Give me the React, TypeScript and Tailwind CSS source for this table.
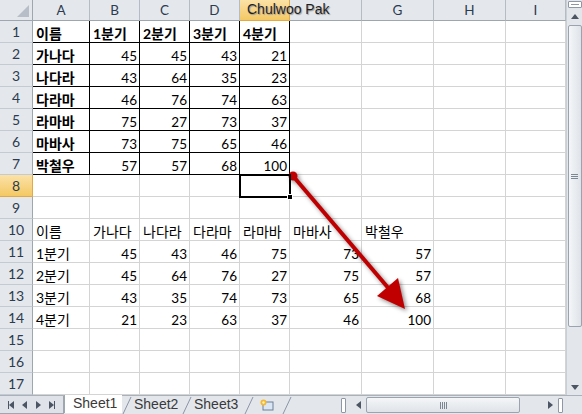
import React from "react";

const top: (string | number)[][] = [
  ["이름", "1분기", "2분기", "3분기", "4분기"],
  ["가나다", 45, 45, 43, 21],
  ["나다라", 43, 64, 35, 23],
  ["다라마", 46, 76, 74, 63],
  ["라마바", 75, 27, 73, 37],
  ["마바사", 73, 75, 65, 46],
  ["박철우", 57, 57, 68, 100],
];
const bottom: (string | number)[][] = [
  ["이름", "가나다", "나다라", "다라마", "라마바", "마바사", "박철우"],
  ["1분기", 45, 43, 46, 75, 73, 57],
  ["2분기", 45, 64, 76, 27, 75, 57],
  ["3분기", 43, 35, 74, 73, 65, 68],
  ["4분기", 21, 23, 63, 37, 46, 100],
];

const letters = ["A", "B", "C", "D", "", "", "G", "H", "I"];

function getCell(r: number, c: number): { v: string | number | null; bold: boolean } {
  if (r >= 1 && r <= 7 && c < 5) {
    const v = top[r - 1][c];
    return { v, bold: r === 1 || c === 0 };
  }
  if (r >= 10 && r <= 14 && c < 7) {
    return { v: bottom[r - 10][c], bold: false };
  }
  return { v: null, bold: false };
}

function Cell({ r, c }: { r: number; c: number }) {
  const { v, bold } = getCell(r, c);
  const inRange = r >= 1 && r <= 7 && c < 5;
  const isNum = typeof v === "number";
  const selected = r === 8 && c === 4;
  const border = inRange ? "border-black" : "border-[#d4d4d4]";
  return (
    <div
      className={`relative flex items-end border-r border-b ${border} ${
        isNum ? "justify-end pr-[2px]" : "justify-start pl-[3px]"
      } overflow-visible whitespace-nowrap`}
    >
      {v !== null && (
        <span
          className={`${isNum ? "text-[13.5px] leading-[16px]" : "text-[14px] leading-[17px]"} ${
            bold ? "font-bold" : "font-normal"
          } text-black`}
        >
          {v}
        </span>
      )}
      {selected && (
        <div className="absolute left-[-1px] top-[-1px] w-[52px] h-[24px] border-2 border-black z-10">
          <div className="absolute right-[-4px] bottom-[-4px] w-[6px] h-[6px] bg-black border border-white" />
        </div>
      )}
    </div>
  );
}

function Tri({ dir }: { dir: "l" | "r" | "u" | "d" }) {
  const pts =
    dir === "l" ? "5,0 5,8 0,4" : dir === "r" ? "0,0 0,8 5,4" : dir === "u" ? "0,5 8,5 4,0" : "0,0 8,0 4,5";
  const w = dir === "l" || dir === "r" ? 5 : 8;
  const h = dir === "l" || dir === "r" ? 8 : 5;
  return (
    <svg width={w} height={h} viewBox={`0 0 ${w} ${h}`}>
      <polygon points={pts} fill="#4b5563" />
    </svg>
  );
}

function Slash() {
  return (
    <svg width="10" height="18" viewBox="0 0 10 18" className="shrink-0">
      <line x1="1" y1="18" x2="9" y2="1" stroke="#8b95a2" strokeWidth="1" />
    </svg>
  );
}

export default function App() {
  const rows = Array.from({ length: 17 }, (_, i) => i + 1);
  return (
    <div className="relative w-[582px] h-[414px] overflow-hidden bg-white font-['Lato','Noto_Sans_CJK_KR',sans-serif]">
      <div className="flex h-[395px]">
        <div className="grid grid-cols-[33px_57px_50px_50px_50px_50px_72px_72px_72px_60px] grid-rows-[21px_repeat(17,22px)] w-[566px] overflow-hidden">
          {/* corner */}
          <div className="relative bg-[#e4e8ed] border-r border-b border-[#9ea6b0] flex items-end justify-end pr-[3px] pb-[3px]">
            <svg width="12" height="12" viewBox="0 0 12 12">
              <polygon points="12,0 12,12 0,12" fill="#b8bec7" />
            </svg>
          </div>
          {letters.map((l, i) => (
            <div
              key={i}
              className={`flex items-center justify-center text-[13.5px] border-r border-b ${
                i === 4
                  ? "bg-gradient-to-b from-[#fbe2a6] to-[#f4c862] border-[#e2a948]"
                  : "bg-[#e4e8ed] border-[#b4bbc4] border-b-[#9ea6b0] text-[#2d3b4f]"
              }`}
            >
              {l}
            </div>
          ))}
          {rows.map((r) => (
            <React.Fragment key={r}>
              <div
                className={`flex items-center justify-center text-[14px] border-r border-b ${
                  r === 8
                    ? "bg-gradient-to-b from-[#fbe2a6] to-[#f4c862] border-[#e2a948] text-[#2d3b4f]"
                    : "bg-[#e4e8ed] border-[#c4cad2] border-r-[#9ea6b0] text-[#2d3b4f]"
                }`}
              >
                {r}
              </div>
              {letters.map((_, c) => (
                <Cell key={c} r={r} c={c} />
              ))}
            </React.Fragment>
          ))}
        </div>
        {/* vertical scrollbar */}
        <div className="w-[16px] bg-[#e3e7ec] border-l border-[#c9cfd6] flex flex-col items-center">
          <div className="w-[14px] h-[7px] mt-[1px] bg-white border border-[#8e97a3] rounded-[1px] flex items-center justify-center">
            <div className="w-[8px] h-[1px] bg-[#8e97a3]" />
          </div>
          <div className="h-[17px] flex items-center justify-center">
            <Tri dir="u" />
          </div>
          <div className="w-[14px] h-[302px] rounded-[2px] border border-[#9aa3ae] bg-gradient-to-r from-[#f4f6f8] to-[#dfe3e8] flex flex-col items-center justify-center gap-[1px]">
            <div className="w-[7px] h-[1px] bg-[#7d8794]" />
            <div className="w-[7px] h-[1px] bg-[#7d8794]" />
            <div className="w-[7px] h-[1px] bg-[#7d8794]" />
          </div>
          <div className="flex-1" />
          <div className="h-[16px] flex items-center justify-center">
            <Tri dir="d" />
          </div>
        </div>
      </div>
      {/* tab bar */}
      <div className="flex h-[19px] bg-[#e3e7ec] border-t border-[#a9b1bb]">
        <div className="w-[64px] flex items-center justify-around px-[4px] border-r border-b border-[#9ea6b0] bg-[#dfe3e9]">
          <div className="flex items-center">
            <div className="w-[1px] h-[8px] bg-[#4b5563]" />
            <Tri dir="l" />
          </div>
          <Tri dir="l" />
          <Tri dir="r" />
          <div className="flex items-center">
            <Tri dir="r" />
            <div className="w-[1px] h-[8px] bg-[#4b5563]" />
          </div>
        </div>
        <div className="flex items-start font-['Liberation_Sans',sans-serif] text-[14px] text-[#3a3a3a] leading-[17px]">
          <div className="w-[58px] h-[18px] mt-[-1px] bg-white border-l border-[#9ea6b0] pl-[8px]">Sheet1</div>
          <Slash />
          <div className="w-[50px] pl-[2px]">Sheet2</div>
          <Slash />
          <div className="w-[52px] pl-[2px]">Sheet3</div>
          <Slash />
          <div className="w-[28px] h-[18px] flex items-center pl-[6px]">
            <svg width="14" height="12" viewBox="0 0 14 12">
              <rect x="3" y="3" width="10" height="8" fill="#dbe6f4" stroke="#6d7f99" />
              <circle cx="3.5" cy="3.5" r="3" fill="#f5b82e" />
              <circle cx="3.5" cy="3.5" r="1.2" fill="#fff4c2" />
            </svg>
          </div>
          <Slash />
        </div>
        <div className="flex-1" />
        {/* horizontal scrollbar */}
        <div className="w-[228px] flex items-center bg-[#e3e7ec]">
          <div className="w-[5px] h-[15px] ml-[3px] bg-white border border-[#8e97a3] rounded-[1px]" />
          <div className="w-[16px] flex justify-center ml-[4px]">
            <Tri dir="l" />
          </div>
          <div className="w-[154px] h-[16px] rounded-[2px] border border-[#9aa3ae] bg-gradient-to-b from-[#f4f6f8] to-[#dfe3e8] flex items-center justify-center gap-[1px]">
            <div className="w-[1px] h-[7px] bg-[#7d8794]" />
            <div className="w-[1px] h-[7px] bg-[#7d8794]" />
            <div className="w-[1px] h-[7px] bg-[#7d8794]" />
            <div className="w-[1px] h-[7px] bg-[#7d8794]" />
          </div>
          <div className="flex-1" />
          <div className="w-[16px] flex justify-center">
            <Tri dir="r" />
          </div>
          <div className="w-[5px] h-[15px] mr-[3px] bg-white border border-[#8e97a3] rounded-[1px]" />
        </div>
        <div className="w-[16px] bg-[#e3e7ec]" />
      </div>
      {/* comment author overlay */}
      <div className="absolute left-[247px] top-[1px] font-['Liberation_Sans',sans-serif] text-[14px] leading-[17px] text-[#1f1f1f] [text-shadow:1px_1px_1px_#9a9a9a] pointer-events-none">
        Chulwoo Pak
      </div>
      {/* arrow */}
      <svg
        className="absolute left-0 top-0 pointer-events-none [filter:drop-shadow(2px_2px_2px_rgba(0,0,0,0.45))]"
        width="582"
        height="414"
        viewBox="0 0 582 414"
      >
        <line x1="293" y1="176" x2="390" y2="290" stroke="#c00000" strokeWidth="4" />
        <circle cx="293" cy="176" r="4.5" fill="#c00000" />
        <polygon points="405,309 377,296 398,278" fill="#c00000" />
      </svg>
    </div>
  );
}
